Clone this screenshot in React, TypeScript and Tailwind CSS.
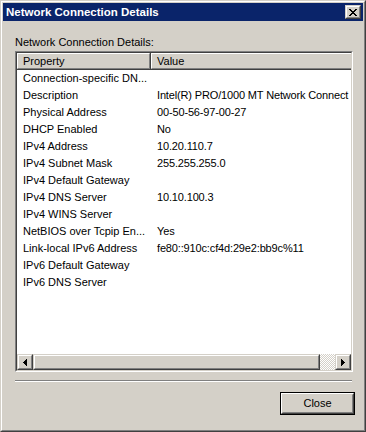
import React from "react";

const rows: [string, string][] = [
  ["Connection-specific DN...", ""],
  ["Description", "Intel(R) PRO/1000 MT Network Connect"],
  ["Physical Address", "00-50-56-97-00-27"],
  ["DHCP Enabled", "No"],
  ["IPv4 Address", "10.20.110.7"],
  ["IPv4 Subnet Mask", "255.255.255.0"],
  ["IPv4 Default Gateway", ""],
  ["IPv4 DNS Server", "10.10.100.3"],
  ["IPv4 WINS Server", ""],
  ["NetBIOS over Tcpip En...", "Yes"],
  ["Link-local IPv6 Address", "fe80::910c:cf4d:29e2:bb9c%11"],
  ["IPv6 Default Gateway", ""],
  ["IPv6 DNS Server", ""],
];

function Raised({ className = "", children }: { className?: string; children?: React.ReactNode }) {
  return (
    <div className={"border border-t-[#d4d0c8] border-l-[#d4d0c8] border-b-[#404040] border-r-[#404040] " + className}>
      <div className="w-full h-full border border-t-white border-l-white border-b-[#808080] border-r-[#808080] bg-[#d4d0c8] flex items-center justify-center">
        {children}
      </div>
    </div>
  );
}

export default function App() {
  return (
    <div
      className="w-[366px] h-[432px] bg-[#d4d0c8] text-[11px] text-black overflow-hidden"
      style={{ fontFamily: '"Liberation Sans", Arial, sans-serif' }}
    >
      <div className="w-full h-full border border-t-[#d4d0c8] border-l-[#d4d0c8] border-b-[#404040] border-r-[#404040]">
        <div className="w-full h-full border border-t-white border-l-white border-b-[#808080] border-r-[#808080] p-[1px] flex flex-col">
          {/* Title bar */}
          <div className="h-[18px] bg-[#0a246a] flex items-center justify-between pl-[3px] pr-[2px]">
            <span className="text-white font-bold text-[11.5px] leading-[18px]">Network Connection Details</span>
            <Raised className="w-[16px] h-[14px]">
              <svg width="8" height="7" viewBox="0 0 8 7" shapeRendering="crispEdges">
                <path d="M0 0h2v1H0zM6 0h2v1H6zM1 1h2v1H1zM5 1h2v1H5zM2 2h4v1H2zM3 3h2v1H3zM2 4h4v1H2zM1 5h2v1H1zM5 5h2v1H5zM0 6h2v1H0zM6 6h2v1H6z" fill="#000" />
              </svg>
            </Raised>
          </div>

          {/* Body */}
          <div className="flex-1 flex flex-col pl-[12px] pr-[10px] pt-[15px]">
            <div className="h-[13px] leading-[13px]">Network Connection Details:</div>

            {/* List view */}
            <div className="mt-[2px] w-[338px] h-[321px] border border-t-[#808080] border-l-[#808080] border-b-white border-r-white">
              <div className="w-full h-full border border-t-[#404040] border-l-[#404040] border-b-[#d4d0c8] border-r-[#d4d0c8] bg-white flex flex-col overflow-hidden">
                {/* Header */}
                <div className="flex h-[17px] shrink-0">
                  <div className="w-[134px] h-full border-r border-b border-r-[#404040] border-b-[#404040]">
                    <div className="h-full border-t border-l border-t-white border-l-white border-r border-b border-r-[#808080] border-b-[#808080] bg-[#d4d0c8] pl-[5px] leading-[14px]">
                      Property
                    </div>
                  </div>
                  <div className="flex-1 h-full border-b border-b-[#404040]">
                    <div className="h-full border-t border-l border-t-white border-l-white border-b border-b-[#808080] bg-[#d4d0c8] pl-[5px] leading-[14px]">
                      Value
                    </div>
                  </div>
                </div>
                {/* Rows */}
                <div className="flex-1 flex flex-col">
                  {rows.map(([p, v]) => (
                    <div key={p} className="flex h-[17px] leading-[17px] shrink-0">
                      <div className="w-[134px] pl-[6px] whitespace-nowrap overflow-hidden">{p}</div>
                      <div className="flex-1 pl-[6px] whitespace-nowrap overflow-hidden tracking-[-0.15px]">{v}</div>
                    </div>
                  ))}
                </div>
                {/* Horizontal scrollbar */}
                <div className="flex h-[16px] shrink-0">
                  <Raised className="w-[16px] h-[16px] shrink-0">
                    <svg width="4" height="7" viewBox="0 0 4 7" shapeRendering="crispEdges">
                      <path d="M3 0h1v7H3zM2 1h1v5H2zM1 2h1v3H1zM0 3h1v1H0z" fill="#000" />
                    </svg>
                  </Raised>
                  <Raised className="w-[287px] h-[16px] shrink-0" />
                  <div className="flex-1 h-full bg-[repeating-conic-gradient(#d4d0c8_0%_25%,#ffffff_0%_50%)] bg-[length:2px_2px]" />
                  <Raised className="w-[16px] h-[16px] shrink-0">
                    <svg width="4" height="7" viewBox="0 0 4 7" shapeRendering="crispEdges">
                      <path d="M0 0h1v7H0zM1 1h1v5H1zM2 2h1v3H2zM3 3h1v1H3z" fill="#000" />
                    </svg>
                  </Raised>
                </div>
              </div>
            </div>

            {/* Separator */}
            <div className="mt-[8px] w-[337px] h-[2px] border-t border-t-[#808080] border-b border-b-white" />

            {/* Close button */}
            <div className="mt-[10px] ml-[265px] w-[75px] h-[23px] border border-black">
              <div className="w-full h-full border border-t-white border-l-white border-b-[#404040] border-r-[#404040]">
                <div className="w-full h-full border border-t-[#d4d0c8] border-l-[#d4d0c8] border-b-[#808080] border-r-[#808080] flex items-center justify-center leading-none">
                  Close
                </div>
              </div>
            </div>
          </div>
        </div>
      </div>
    </div>
  );
}
